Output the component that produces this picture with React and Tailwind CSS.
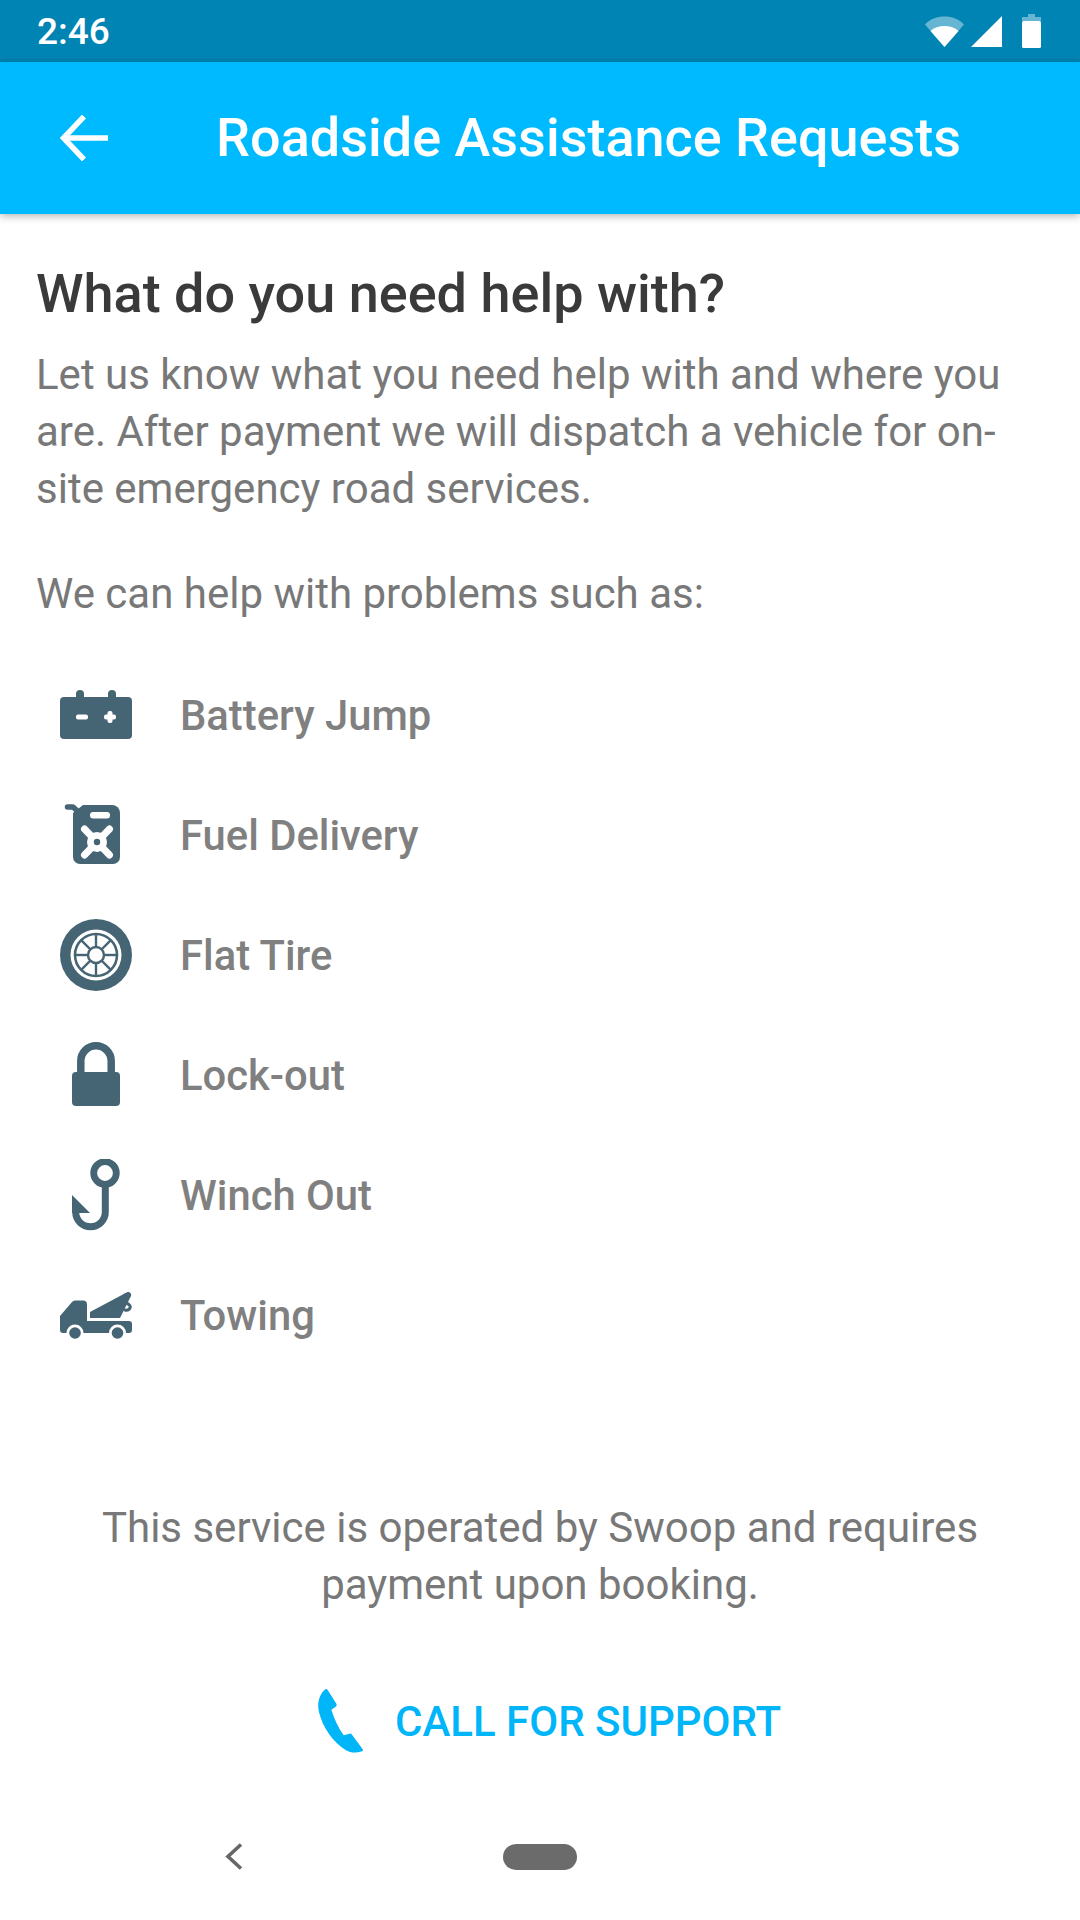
const ICON = "#456574";

function Wifi() {
  return (
    <svg width="39" height="31" viewBox="0 0 39 31">
      <path d="M0 8.5C5 3 12 0.5 19.5 0.5S34 3 39 8.5L19.5 31Z" fill="#ffffff" fillOpacity="0.4" />
      <path d="M5.5 15C9 11.5 14 10 19.5 10S30 11.5 33.5 15L19.5 31Z" fill="#ffffff" />
    </svg>
  );
}
function Signal() {
  return (
    <svg width="31" height="31" viewBox="0 0 31 31">
      <path d="M0 31 31 0V31Z" fill="#ffffff" />
    </svg>
  );
}
function Bat() {
  return (
    <svg width="19" height="34" viewBox="0 0 19 34">
      <path d="M6 0h7v3h6v4H0V3h6Z" fill="#ffffff" fillOpacity="0.4" />
      <rect x="0" y="7" width="19" height="27" rx="1.5" fill="#ffffff" />
    </svg>
  );
}
function ArrowBack() {
  return (
    <svg width="48" height="46" viewBox="0 0 48 46" fill="none" stroke="#ffffff" strokeWidth="5.5">
      <path d="M48 23H4" />
      <path d="M24 1.5 3.5 23 24 44.5" />
    </svg>
  );
}
function Battery() {
  return (
    <svg width="72" height="72" viewBox="0 0 72 72">
      <rect x="0" y="18" width="72" height="42" rx="4" fill={ICON} />
      <path d="M16 18v-3a4 4 0 0 1 8 0v3ZM48 18v-3a4 4 0 0 1 8 0v3Z" fill={ICON} />
      <rect x="16" y="35.5" width="12" height="5" rx="2" fill="#fff" />
      <rect x="44" y="35.5" width="12" height="5" rx="2" fill="#fff" />
      <rect x="47.5" y="32" width="5" height="12" rx="2" fill="#fff" />
    </svg>
  );
}
function Fuel() {
  return (
    <svg width="72" height="72" viewBox="0 0 72 72">
      <path d="M7.500 8h5.500l10 9" fill="none" stroke={ICON} strokeWidth="5.5" strokeLinecap="round" strokeLinejoin="round" />
      <path d="M13 14l10-8h29a8 8 0 0 1 8 8v44a7 7 0 0 1-7 7H20a7 7 0 0 1-7-7Z" fill={ICON} />
      <rect x="30" y="13" width="20" height="6.5" rx="3" fill="#fff" />
      <path d="M24.500 30 49.500 56M49.500 30 24.500 56" stroke="#fff" strokeWidth="7" strokeLinecap="round" />
      <circle cx="37" cy="43" r="10" fill="#fff" />
      <circle cx="37" cy="43" r="3.2" fill={ICON} />
    </svg>
  );
}
function Tire() {
  const spokes = [0, 45, 90, 135, 180, 225, 270, 315];
  return (
    <svg width="72" height="72" viewBox="0 0 72 72">
      <circle cx="36" cy="36" r="36" fill={ICON} />
      <circle cx="36" cy="36" r="25.5" fill="#fff" />
      <circle cx="36" cy="36" r="21" fill="none" stroke={ICON} strokeWidth="2.6" />
      {spokes.map((a) => (
        <line key={a} x1="36" y1="36" x2="36" y2="15" stroke={ICON} strokeWidth="2.4" transform={`rotate(${a} 36 36)`} />
      ))}
      <circle cx="36" cy="36" r="8" fill="#fff" stroke={ICON} strokeWidth="2.4" />
    </svg>
  );
}
function Lock() {
  return (
    <svg width="72" height="72" viewBox="0 0 72 72">
      <path d="M20.8 36V22a15.2 15.2 0 0 1 30.4 0V36" fill="none" stroke={ICON} strokeWidth="7.5" />
      <rect x="12" y="33" width="48" height="34" rx="4" fill={ICON} />
    </svg>
  );
}
function Hook() {
  return (
    <svg width="72" height="72" viewBox="0 0 72 72">
      <circle cx="45" cy="14" r="11.3" fill="none" stroke={ICON} strokeWidth="6.8" />
      <path d="M45.3 24V53A14.8 14.8 0 0 1 15.7 53V50" fill="none" stroke={ICON} strokeWidth="7" />
      <path d="M12 36 30 54H12Z" fill={ICON} />
    </svg>
  );
}
function Tow() {
  return (
    <svg width="72" height="72" viewBox="0 0 72 72">
      <path d="M0 37 12 23a5 5 0 0 1 3-1.500h8a4 4 0 0 1 4 4V42H69a3 3 0 0 1 3 3v6a3 3 0 0 1-3 3H3a3 3 0 0 1-3-3Z" fill={ICON} />
      <path d="M30 33 67.500 13a3 3 0 0 1 3.500 4L60 39H30Z" fill={ICON} />
      <path d="M65 16 66 24c3 1 5 3 4 5-1 2-3 2.500-5 2" fill="none" stroke={ICON} strokeWidth="3" strokeLinecap="round" />
      <circle cx="15" cy="54" r="8.500" fill="#fff" />
      <circle cx="15" cy="54" r="5.800" fill={ICON} />
      <circle cx="57.500" cy="54" r="8.500" fill="#fff" />
      <circle cx="57.500" cy="54" r="5.800" fill={ICON} />
    </svg>
  );
}
function Phone() {
  return (
    <svg width="45" height="64" viewBox="0 0 135 192">
      <path d="M20 2C24-1 27 0 29 3L55 44C57 48 56 51 53 53L40 62C48 88 60 115 77 139L95 134C98 133 100 134 102 137L134 181C136 185 135 186 132 187C115 193 98 192 84 184C45 160 14 115 3 70C-3 44 3 18 20 2Z" fill="#00B5F8" />
    </svg>
  );
}
function Row({ icon, label }) {
  return (
    <div className="flex h-[120px] items-center">
      <div className="ml-[24px] h-[72px] w-[72px]">{icon}</div>
      <span className="ml-[48px] mt-[2px] text-[41.75px] font-medium text-[#808080]">{label}</span>
    </div>
  );
}
const rows = [
  [<Battery />, "Battery Jump"],
  [<Fuel />, "Fuel Delivery"],
  [<Tire />, "Flat Tire"],
  [<Lock />, "Lock-out"],
  [<Hook />, "Winch Out"],
  [<Tow />, "Towing"],
];

export default function App() {
  return (
    <div className="flex h-[1920px] w-[1080px] flex-col bg-white font-['Roboto',sans-serif]">
      <div className="flex h-[62px] items-center bg-[#0084B4] pl-[37px] pr-[39px]">
        <span className="mt-[2px] text-[37px] font-medium text-white">2:46</span>
        <div className="ml-auto flex items-center">
          <Wifi />
          <div className="ml-[7px]"><Signal /></div>
          <div className="ml-[20px]"><Bat /></div>
        </div>
      </div>
      <header className="z-10 flex h-[152px] items-center bg-[#00BAFF] pl-[60px] shadow-[0_2px_8px_rgba(0,0,0,0.3)]">
        <ArrowBack />
        <h1 className="ml-[108px] text-[54px] font-medium leading-none text-white">Roadside Assistance Requests</h1>
      </header>
      <main className="flex flex-1 flex-col px-[36px]">
        <h2 className="mt-[48px] text-[54px] font-medium leading-[64px] text-[#3a3a3a]">What do you need help with?</h2>
        <p className="mt-[20px] text-[42px] leading-[57px] text-[#787878]">Let us know what you need help with and where you are. After payment we will dispatch a vehicle for on-site emergency road services.</p>
        <p className="mt-[48px] text-[42px] leading-[57px] text-[#787878]">We can help with problems such as:</p>
        <div className="mt-[33px] flex flex-col">
          {rows.map(([icon, label]) => (
            <Row key={label} icon={icon} label={label} />
          ))}
        </div>
        <p className="mt-[124px] text-center text-[42px] leading-[57px] text-[#787878]">This service is operated by Swoop and requires payment upon booking.</p>
        <div className="ml-[282px] mt-[76px] flex items-center">
          <Phone />
          <span className="ml-[32px] text-[42px] font-medium text-[#00B5F8]">CALL FOR SUPPORT</span>
        </div>
      </main>
      <nav className="relative h-[126px]">
        <svg className="absolute left-[225px] top-[49px]" width="18" height="27" viewBox="0 0 18 27" fill="none" stroke="#666666" strokeWidth="3.6">
          <path d="M16 1.500 3 13.500 16 25.500" />
        </svg>
        <div className="absolute left-[503px] top-[50px] h-[26px] w-[74px] rounded-full bg-[#6b6b6b]" />
      </nav>
    </div>
  );
}
